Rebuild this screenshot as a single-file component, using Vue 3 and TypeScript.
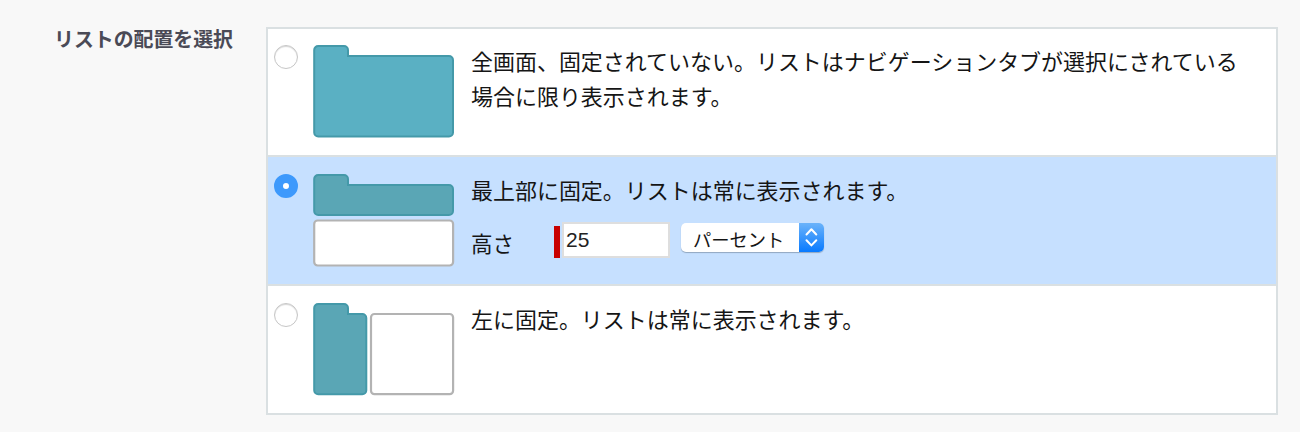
<script setup lang="ts">
import { ref } from 'vue'

type Placement = 'full' | 'top' | 'left'

interface Option {
  id: Placement
  text: string
}

const options: Option[] = [
  { id: 'full', text: '全画面、固定されていない。リストはナビゲーションタブが選択にされている場合に限り表示されます。' },
  { id: 'top', text: '最上部に固定。リストは常に表示されます。' },
  { id: 'left', text: '左に固定。リストは常に表示されます。' },
]

const selected = ref<Placement>('top')
const height = ref('25')
</script>

<template>
  <main class="page">
    <div class="label">リストの配置を選択</div>
    <div class="options" role="radiogroup">
      <div
        v-for="option in options"
        :key="option.id"
        class="option"
        :class="{ selected: selected === option.id }"
        @click="selected = option.id"
      >
        <span class="radio" role="radio" :aria-checked="selected === option.id"></span>
        <svg class="preview" width="142" height="94" viewBox="0 0 142 94">
          <path
            v-if="option.id === 'full'"
            class="folder bright"
            d="M1.2 6a4 4 0 0 1 4-4H31a4 4 0 0 1 4 4V12H136a4 4 0 0 1 4 4V88.500a4 4 0 0 1-4 4H5.200a4 4 0 0 1-4-4Z"
          />
          <template v-else-if="option.id === 'top'">
            <path
              class="folder"
              d="M1.200 6a4 4 0 0 1 4-4H31a4 4 0 0 1 4 4V12H136a4 4 0 0 1 4 4V38a4 4 0 0 1-4 4H5.200a4 4 0 0 1-4-4Z"
            />
            <rect class="pane" x="1.200" y="47.500" width="138.900" height="45" rx="3.500" />
          </template>
          <template v-else>
            <path
              class="folder"
              d="M1.200 6a4 4 0 0 1 4-4H31a4 4 0 0 1 4 4V12H49.300a4 4 0 0 1 4 4V88.200a4 4 0 0 1-4 4H5.200a4 4 0 0 1-4-4Z"
            />
            <rect class="pane" x="58" y="12" width="82.100" height="80.200" rx="3.500" />
          </template>
        </svg>
        <div class="content">
          <p class="text">{{ option.text }}</p>
          <div v-if="option.id === 'top'" class="size">
            <span class="size-label">高さ</span>
            <span class="required"></span>
            <input v-model="height" class="height" type="text" />
            <div class="select">
              <span class="unit">パーセント</span>
              <span class="arrows">
                <svg width="25" height="29" viewBox="0 0 25 29">
                  <path d="M7.500 11.500 12.400 6.300l4.900 5.200M7.500 17.200l4.900 5.200 4.900-5.200" />
                </svg>
              </span>
            </div>
          </div>
        </div>
      </div>
    </div>
  </main>
</template>

<style>
body {
  margin: 0;
  background: #f8f8f8;
}
</style>

<style scoped>
.page {
  box-sizing: border-box;
  display: flex;
  width: 1300px;
  height: 432px;
  padding: 27px 22px 0 54px;
  background: #f8f8f8;
  color: #151515;
  font-family: "Liberation Sans", "Noto Sans CJK JP", sans-serif;
}

.label {
  width: 212px;
  flex: none;
  color: #4a4a56;
  font-size: 19.900px;
  font-weight: 700;
  line-height: 26px;
  white-space: nowrap;
}

.options {
  box-sizing: border-box;
  width: 1012px;
  height: 388px;
  border: 2px solid #dae0e2;
  background: #fff;
}

.option {
  box-sizing: border-box;
  display: flex;
  align-items: flex-start;
  height: 129px;
  padding: 16px 0 0 6px;
  border-bottom: 2px solid #dae0e2;
}

.option:first-child {
  height: 128px;
  padding-top: 15px;
}

.option:last-child {
  height: 127px;
  border-bottom: 0;
}

.option.selected {
  background: #c6e0ff;
}

.radio {
  box-sizing: border-box;
  flex: none;
  width: 24px;
  height: 24px;
  margin-top: 1px;
  border: 1.500px solid #c6c6c6;
  border-radius: 50%;
  background: #fff;
  box-shadow: inset 0 1px 1px #d8d8d8;
}

.selected .radio {
  border: 9px solid #3d99fc;
  box-shadow: none;
}

.preview {
  flex: none;
  margin-left: 15px;
}

.folder {
  fill: #5aa6b5;
  stroke: #4499a9;
  stroke-width: 2;
}

.folder.bright {
  fill: #5ab0c3;
}

.pane {
  fill: #fff;
  stroke: #b3b3b3;
  stroke-width: 2.200;
}

.content {
  width: 780px;
  margin: 1px 0 0 16px;
}

.text {
  margin: 0;
  font-size: 21.970px;
  line-height: 35px;
}

.size {
  display: flex;
  align-items: flex-start;
  height: 40px;
  margin-top: 12px;
}

.size-label {
  width: 83px;
  margin-top: 7px;
  font-size: 21.500px;
  line-height: 35px;
}

.required {
  width: 6px;
  height: 32px;
  margin-top: 5px;
  background: #c80000;
}

.height {
  box-sizing: border-box;
  width: 108px;
  height: 36px;
  margin: 1px 0 0 2px;
  padding: 0 0 0 2px;
  border: 2px solid #dedede;
  border-radius: 0;
  outline: 0;
  background: #fff;
  color: #222;
  font: 21px/32px "Liberation Sans", sans-serif;
}

.select {
  display: flex;
  width: 143px;
  height: 29px;
  margin: 2px 0 0 11px;
  overflow: hidden;
  border-radius: 5px;
  background: #fff;
  box-shadow: 0 1px 1px #91a7c0;
}

.unit {
  width: 118px;
  padding-left: 12px;
  box-sizing: border-box;
  font-size: 18.300px;
  line-height: 35px;
  white-space: nowrap;
}

.arrows {
  width: 25px;
  height: 29px;
  background: linear-gradient(#6bb3fa, #087aff);
}

.arrows svg {
  display: block;
  fill: none;
  stroke: #fff;
  stroke-width: 2;
  stroke-linecap: round;
  stroke-linejoin: round;
}
</style>
